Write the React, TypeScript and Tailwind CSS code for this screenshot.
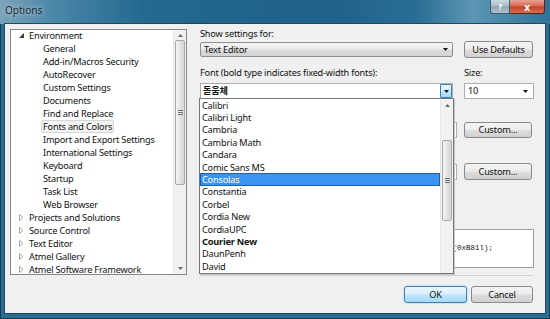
import React from 'react'

type TreeItem = { label: string; level: number; expander?: 'open' | 'closed'; selected?: boolean }

const treeItems: TreeItem[] = [
  { label: 'Environment', level: 0, expander: 'open' },
  { label: 'General', level: 1 },
  { label: 'Add-in/Macros Security', level: 1 },
  { label: 'AutoRecover', level: 1 },
  { label: 'Custom Settings', level: 1 },
  { label: 'Documents', level: 1 },
  { label: 'Find and Replace', level: 1 },
  { label: 'Fonts and Colors', level: 1, selected: true },
  { label: 'Import and Export Settings', level: 1 },
  { label: 'International Settings', level: 1 },
  { label: 'Keyboard', level: 1 },
  { label: 'Startup', level: 1 },
  { label: 'Task List', level: 1 },
  { label: 'Web Browser', level: 1 },
  { label: 'Projects and Solutions', level: 0, expander: 'closed' },
  { label: 'Source Control', level: 0, expander: 'closed' },
  { label: 'Text Editor', level: 0, expander: 'closed' },
  { label: 'Atmel Gallery', level: 0, expander: 'closed' },
  { label: 'Atmel Software Framework', level: 0, expander: 'closed' },
]

const fontList = [
  { name: 'Calibri' },
  { name: 'Calibri Light' },
  { name: 'Cambria' },
  { name: 'Cambria Math' },
  { name: 'Candara' },
  { name: 'Comic Sans MS' },
  { name: 'Consolas', selected: true },
  { name: 'Constantia' },
  { name: 'Corbel' },
  { name: 'Cordia New' },
  { name: 'CordiaUPC' },
  { name: 'Courier New', bold: true },
  { name: 'DaunPenh' },
  { name: 'David' },
]

const btnGray =
  'flex items-center justify-center rounded-[3px] border border-[#8a8a8a] bg-[linear-gradient(#f4f4f4,#ececec_48%,#dedede_52%,#d0d0d0)]'

function ComboArrow() {
  return (
    <svg width="5" height="3" viewBox="0 0 5 3">
      <path d="M0 0h5L2.5 3z" fill="#111" />
    </svg>
  )
}

function ScrollArrow({ down }: { down?: boolean }) {
  return (
    <svg width="5" height="3" viewBox="0 0 5 3">
      <path d={down ? 'M0 0h5L2.5 3z' : 'M0 3h5L2.5 0z'} fill="#6b6b6b" />
    </svg>
  )
}

function Grip() {
  return (
    <div className="flex flex-col gap-[1px]">
      <div className="h-px w-[5px] bg-[#6e6e6e]" />
      <div className="h-px w-[5px] bg-[#6e6e6e]" />
      <div className="h-px w-[5px] bg-[#6e6e6e]" />
    </div>
  )
}

function Expander({ kind }: { kind?: 'open' | 'closed' }) {
  if (kind === 'open')
    return (
      <svg width="5" height="5" viewBox="0 0 5 5">
        <path d="M5 0v5H0z" fill="#3b3b3b" />
      </svg>
    )
  if (kind === 'closed')
    return (
      <svg width="5" height="7" viewBox="0 0 5 7">
        <path d="M0.5 0.5L4 3.5L0.5 6.5z" fill="none" stroke="#9c9c9c" strokeWidth="0.9" />
      </svg>
    )
  return null
}

function Tree() {
  return (
    <div className="flex h-[246px] w-[177px] overflow-hidden border border-[#828790] bg-white">
      <div className="-mt-[1px] flex-1 overflow-hidden">
        {treeItems.map((item) => (
          <div key={item.label} className="flex h-[13px] items-center whitespace-nowrap">
            {item.level === 0 ? (
              <>
                <span className="flex w-[18px] justify-start pl-[8px]">
                  <Expander kind={item.expander} />
                </span>
                <span>{item.label}</span>
              </>
            ) : (
              <span
                className={
                  item.selected
                    ? 'ml-[30px] rounded-[2px] border border-[#d6d6d6] bg-[#f3f3f3] px-[1px] leading-[11px]'
                    : 'ml-[32px]'
                }
              >
                {item.label}
              </span>
            )}
          </div>
        ))}
      </div>
      {/* scrollbar */}
      <div className="flex w-[13px] flex-col items-center bg-[#f1f1f1] border-l border-[#e8e8e8]">
        <div className="flex h-[10px] items-center">
          <ScrollArrow />
        </div>
        <div className="flex h-[145px] w-[10px] items-center justify-center rounded-[2px] border border-[#a9a9a9] bg-[linear-gradient(90deg,#f5f5f5,#e3e3e3_50%,#d6d6d6)]">
          <Grip />
        </div>
        <div className="flex-1" />
        <div className="flex h-[12px] items-center">
          <ScrollArrow down />
        </div>
      </div>
    </div>
  )
}

function FontDropdown() {
  return (
    <div className="absolute left-[-1px] top-[69px] flex h-[176px] w-[255px] border border-[#767676] bg-white shadow-[1px_1px_0_#c8c8c8]">
      <div className="flex-1 overflow-hidden">
        {fontList.map((f) => (
          <div
            key={f.name}
            className={
              f.selected
                ? 'flex h-[12.4px] items-center border border-[#1f5fae] bg-[#3a95f2] pl-[1px] text-white'
                : f.bold
                  ? 'flex h-[12.4px] items-center pl-[2px] font-bold'
                  : 'flex h-[12.4px] items-center pl-[2px]'
            }
          >
            {f.name}
          </div>
        ))}
      </div>
      <div className="flex w-[13px] flex-col items-center bg-[#f1f1f1] border-l border-[#e6e6e6]">
        <div className="flex h-[13px] items-center">
          <ScrollArrow />
        </div>
        <div className="h-[28px]" />
        <div className="flex h-[81px] w-[10px] items-center justify-center rounded-[2px] border border-[#a9a9a9] bg-[linear-gradient(90deg,#f5f5f5,#e3e3e3_50%,#d6d6d6)]">
          <Grip />
        </div>
      </div>
    </div>
  )
}

function RightPanel() {
  return (
    <div className="relative ml-[13px] flex w-[334px] flex-col">
      <div className="h-[9px] leading-[9px]">Show settings for:</div>

      <div className="mt-[3px] flex h-[17px] items-center">
        <div className="flex h-[15px] w-[253px] items-center justify-between rounded-[2px] border border-[#8f8f8f] bg-[linear-gradient(#f4f4f4,#ebebeb_48%,#dcdcdc_52%,#d2d2d2)] pl-[3px] pr-[4px]">
          <span>Text Editor</span>
          <ComboArrow />
        </div>
        <div className={`${btnGray} ml-[11px] h-[17px] w-[69px]`}>Use Defaults</div>
      </div>

      <div className="mt-[10px] flex h-[10px] items-center">
        <span className="w-[264px]">Font (bold type indicates fixed-width fonts):</span>
        <span>Size:</span>
      </div>

      <div className="mt-[5px] flex h-[16px]">
        <div className="flex h-[16px] w-[253px] items-stretch border border-[#abadb3] bg-white">
          <span className="flex flex-1 items-center pl-[2px] font-bold">돋움체</span>
          <span className="flex w-[12px] items-center justify-center rounded-[1px] border border-[#3c7fb1] bg-[linear-gradient(#eaf6fd,#d9f0fc_48%,#bee6fd_52%,#a7d9f5)]">
            <ComboArrow />
          </span>
        </div>
        <div className="ml-[11px] flex h-[16px] w-[70px] items-center justify-between border border-[#abadb3] bg-white pl-[3px] pr-[5px]">
          <span>10</span>
          <ComboArrow />
        </div>
      </div>

      {/* Item foreground / background (behind dropdown) */}
      <div className="mt-[23px] flex h-[16px] items-center justify-end pr-[2px]">
        <div className="flex h-[16px] w-[120px] items-center justify-end border border-[#abadb3] bg-white pr-[2px]">
          <ComboArrow />
        </div>
        <div className={`${btnGray} ml-[7px] h-[16px] w-[68px]`}>Custom...</div>
      </div>
      <div className="mt-[25px] flex h-[17px] items-center justify-end pr-[2px]">
        <div className="flex h-[16px] w-[120px] items-center justify-end border border-[#abadb3] bg-white pr-[2px]">
          <ComboArrow />
        </div>
        <div className={`${btnGray} ml-[7px] h-[17px] w-[68px]`}>Custom...</div>
      </div>

      {/* Sample */}
      <div className="mt-[49px] flex h-[39px] items-center justify-end border border-[#a0a0a0] bg-white pr-[40px] font-['Liberation_Mono',monospace] text-[7.5px] tracking-normal">
        ij = I::oO(0xB81l);
      </div>

      <FontDropdown />
    </div>
  )
}

export default function App() {
  return (
    <div className="flex h-[319px] w-[550px] flex-col overflow-hidden bg-[#2b6d93] font-['Noto_Sans','Noto_Sans_CJK_KR',sans-serif] text-[9.2px] leading-none tracking-[-0.2px] text-[#111] ring-1 ring-inset ring-[#163b52]">
      {/* Title bar */}
      <div className="flex h-[24px] items-start justify-between bg-[linear-gradient(90deg,#7ba4ba_0%,#4a86a8_10%,#25698f_26%,#1f6189_60%,#2b6e95_76%,#5c96b4_86%,#2e7299_100%)]">
        <span className="pl-[5px] pt-[5px] text-[10px] tracking-normal text-[#1d2a33] [text-shadow:0_0_5px_rgba(255,255,255,0.75)]">
          Options
        </span>
        <div className="mr-[5px] flex">
          <div className="flex h-[14px] w-[20px] items-center justify-center rounded-bl-[3px] border border-t-0 border-[#3f586a] bg-[linear-gradient(#ccd9e3,#a8bbc8_45%,#8ea5b6_52%,#adc1ce)] text-[9px] font-bold text-white">
            ?
          </div>
          <div className="flex h-[14px] w-[35px] items-center justify-center rounded-br-[3px] border border-l-0 border-t-0 border-[#5b2419] bg-[linear-gradient(#eaa193,#d56c57_45%,#c2412b_52%,#d8704f)] text-[10px] font-bold text-white">
            x
          </div>
        </div>
      </div>

      {/* Client area */}
      <div className="mx-[5px] flex h-[289px] flex-col bg-[#f0f0f0] ring-1 ring-[#1d4a63]">
        <div className="flex pl-[5px] pt-[5px]">
          <Tree />
          <RightPanel />
        </div>
        <div className="ml-[195px] mr-[12px] h-px bg-[#d2d2d2]" />
        <div className="mt-[10px] flex justify-end gap-[4px] pr-[12px]">
          <div className="flex h-[17px] w-[63px] items-center justify-center rounded-[3px] border border-[#3c7fb1] bg-[linear-gradient(#eaf6fd,#d9f0fc_48%,#bee6fd_52%,#a7d9f5)] shadow-[0_0_2px_#7fc4ee]">
            OK
          </div>
          <div className={`${btnGray} h-[17px] w-[62px]`}>Cancel</div>
        </div>
      </div>
    </div>
  )
}
